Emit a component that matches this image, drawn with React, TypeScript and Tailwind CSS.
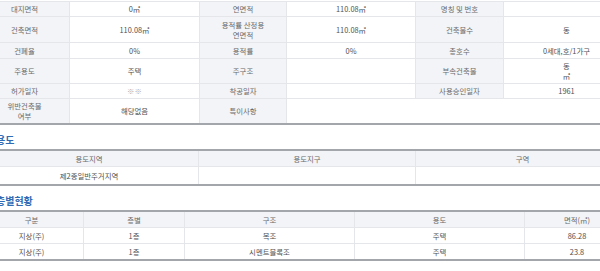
import React from "react";

const font = { fontFamily: '"Noto Sans CJK KR", "Noto Sans", sans-serif' };

type Cell = { t?: React.ReactNode; label?: boolean; span?: number; muted?: boolean };

const rows: { h: string; cells: Cell[] }[] = [
  {
    h: "h-[15px]",
    cells: [
      { t: "대지면적", label: true },
      { t: "0㎡" },
      { t: "연면적", label: true },
      { t: "110.08㎡" },
      { t: "명칭 및 번호", label: true },
      { t: "" },
    ],
  },
  {
    h: "h-[26px]",
    cells: [
      { t: "건축면적", label: true },
      { t: "110.08㎡" },
      { t: <>용적률 산정용<br />연면적</>, label: true },
      { t: "110.08㎡" },
      { t: "건축물수", label: true },
      { t: "동" },
    ],
  },
  {
    h: "h-[16px]",
    cells: [
      { t: "건폐율", label: true },
      { t: "0%" },
      { t: "용적률", label: true },
      { t: "0%" },
      { t: "총호수", label: true },
      { t: "0세대,호/1가구" },
    ],
  },
  {
    h: "h-[25px]",
    cells: [
      { t: "주용도", label: true },
      { t: "주택" },
      { t: "주구조", label: true },
      { t: "" },
      { t: "부속건축물", label: true },
      { t: <>동<br />㎡</> },
    ],
  },
  {
    h: "h-[15px]",
    cells: [
      { t: "허가일자", label: true },
      { t: "※※", muted: true },
      { t: "착공일자", label: true },
      { t: "" },
      { t: "사용승인일자", label: true },
      { t: "1961" },
    ],
  },
];

function Heading({ children }: { children: React.ReactNode }) {
  return (
    <div className="h-[24px] pt-[9px] pl-[16px]">
      <div className="text-[10px] leading-[12px] font-semibold text-[#2f6cb5]">{children}</div>
    </div>
  );
}

function C({ c, last, h }: { c: Cell; last?: boolean; h: string }) {
  return (
    <div
      className={`${h} flex items-center justify-center text-center text-[7.4px] leading-[10px] border-r border-[#e4e6e9] ${
        last ? "" : "border-b"
      } ${c.label ? "bg-[#f3f4f7] text-[#6a6a6a]" : "bg-white text-[#505050]"} ${c.muted ? "text-[#b0b0b0]" : ""}`}
    >
      {c.t}
    </div>
  );
}

export default function App() {
  return (
    <div className="w-[600px] h-[271px] overflow-hidden bg-white" style={font}>
      <div className="ml-[-20px] w-[650px] pt-[1px]">
        {/* Table 1 */}
        <div className="border-t border-[#e4e6e9] border-b-2 border-b-[#a3a7ab] grid grid-cols-[90px_130px_87px_129px_88px_126px]">
          {rows.map((r, i) => r.cells.map((c, j) => <C key={`${i}-${j}`} c={c} h={r.h} />))}
          <C c={{ t: <>위반건축물<br />여부</>, label: true }} h="h-[24px]" last />
          <C c={{ t: "해당없음" }} h="h-[24px]" last />
          <C c={{ t: "특이사항", label: true }} h="h-[24px]" last />
          <div className="col-span-3 h-[24px] bg-white" />
        </div>

        <Heading>용도</Heading>
        <div className="border-t-2 border-b-2 border-[#a3a7ab] grid grid-cols-[219px_217px_214px]">
          <C c={{ t: "용도지역", label: true }} h="h-[16px]" />
          <C c={{ t: "용도지구", label: true }} h="h-[16px]" />
          <C c={{ t: "구역", label: true }} h="h-[16px]" />
          <C c={{ t: "제2종일반주거지역" }} h="h-[17px]" last />
          <C c={{ t: "" }} h="h-[17px]" last />
          <C c={{ t: "" }} h="h-[17px]" last />
        </div>

        <Heading>층별현황</Heading>
        <div className="border-t-2 border-b-2 border-[#a3a7ab] grid grid-cols-[104px_101px_170px_170px_105px]">
          {["구분", "층별", "구조", "용도", "면적(㎡)"].map((t) => (
            <C key={t} c={{ t, label: true }} h="h-[16px]" />
          ))}
          {["지상(주)", "1층", "목조", "주택", "86.28"].map((t, i) => (
            <C key={"a" + i} c={{ t }} h="h-[16px]" />
          ))}
          {["지상(주)", "1층", "시멘트블록조", "주택", "23.8"].map((t, i) => (
            <C key={"b" + i} c={{ t }} h="h-[15px]" last />
          ))}
        </div>

        <Heading>소유자현황</Heading>
      </div>
    </div>
  );
}
